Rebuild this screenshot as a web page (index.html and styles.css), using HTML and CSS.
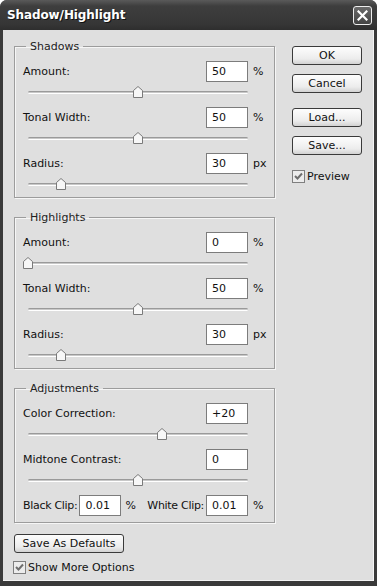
FILE: index.html
```html
<!DOCTYPE html>
<html lang="en">
<head>
    <meta charset="UTF-8">
    <title>Shadow/Highlight</title>
    <link rel="stylesheet" href="styles.css">
</head>
<body>
    <div class="window">
        <div class="titlebar">
            <span class="title">Shadow/Highlight</span>
            <span class="close">
                <svg width="11" height="11" viewBox="0 0 11 11"><path d="M1.5 1.5 L9.5 9.5 M9.5 1.5 L1.5 9.5" stroke="#fff" stroke-width="2.2" stroke-linecap="square"/></svg>
            </span>
        </div>
        <div class="client">
            <div class="main">
                <fieldset class="group">
                    <legend>Shadows</legend>
                    <div class="field"><label>Amount:</label><input class="num" value="50"><span class="unit">%</span></div>
                    <div class="slider"><div class="track"><span class="thumb" style="left: 50%"><svg width="10" height="12" viewBox="0 0 10 12"><path d="M0.5 4.5 L5 0.5 L9.5 4.5 V11.5 H0.5 Z" fill="#f7f7f7" stroke="#7a7a7a"/></svg></span></div></div>
                    <div class="field"><label>Tonal Width:</label><input class="num" value="50"><span class="unit">%</span></div>
                    <div class="slider"><div class="track"><span class="thumb" style="left: 50%"><svg width="10" height="12" viewBox="0 0 10 12"><path d="M0.5 4.5 L5 0.5 L9.5 4.5 V11.5 H0.5 Z" fill="#f7f7f7" stroke="#7a7a7a"/></svg></span></div></div>
                    <div class="field"><label>Radius:</label><input class="num" value="30"><span class="unit">px</span></div>
                    <div class="slider"><div class="track"><span class="thumb" style="left: 15%"><svg width="10" height="12" viewBox="0 0 10 12"><path d="M0.5 4.5 L5 0.5 L9.5 4.5 V11.5 H0.5 Z" fill="#f7f7f7" stroke="#7a7a7a"/></svg></span></div></div>
                </fieldset>

                <fieldset class="group">
                    <legend>Highlights</legend>
                    <div class="field"><label>Amount:</label><input class="num" value="0"><span class="unit">%</span></div>
                    <div class="slider"><div class="track"><span class="thumb" style="left: 0%"><svg width="10" height="12" viewBox="0 0 10 12"><path d="M0.5 4.5 L5 0.5 L9.5 4.5 V11.5 H0.5 Z" fill="#f7f7f7" stroke="#7a7a7a"/></svg></span></div></div>
                    <div class="field"><label>Tonal Width:</label><input class="num" value="50"><span class="unit">%</span></div>
                    <div class="slider"><div class="track"><span class="thumb" style="left: 50%"><svg width="10" height="12" viewBox="0 0 10 12"><path d="M0.5 4.5 L5 0.5 L9.5 4.5 V11.5 H0.5 Z" fill="#f7f7f7" stroke="#7a7a7a"/></svg></span></div></div>
                    <div class="field"><label>Radius:</label><input class="num" value="30"><span class="unit">px</span></div>
                    <div class="slider"><div class="track"><span class="thumb" style="left: 15%"><svg width="10" height="12" viewBox="0 0 10 12"><path d="M0.5 4.5 L5 0.5 L9.5 4.5 V11.5 H0.5 Z" fill="#f7f7f7" stroke="#7a7a7a"/></svg></span></div></div>
                </fieldset>

                <fieldset class="group adjust">
                    <legend>Adjustments</legend>
                    <div class="field"><label>Color Correction:</label><input class="num" value="+20"><span class="unit"></span></div>
                    <div class="slider"><div class="track"><span class="thumb" style="left: 61%"><svg width="10" height="12" viewBox="0 0 10 12"><path d="M0.5 4.5 L5 0.5 L9.5 4.5 V11.5 H0.5 Z" fill="#f7f7f7" stroke="#7a7a7a"/></svg></span></div></div>
                    <div class="field"><label>Midtone Contrast:</label><input class="num" value="0"><span class="unit"></span></div>
                    <div class="slider"><div class="track"><span class="thumb" style="left: 50%"><svg width="10" height="12" viewBox="0 0 10 12"><path d="M0.5 4.5 L5 0.5 L9.5 4.5 V11.5 H0.5 Z" fill="#f7f7f7" stroke="#7a7a7a"/></svg></span></div></div>
                    <div class="field clip">
                        <label>Black Clip:</label><input class="num" value="0.01"><span class="pct">%</span>
                        <label class="white">White Clip:</label><input class="num" value="0.01"><span class="unit">%</span>
                    </div>
                </fieldset>

                <button class="btn defaults">Save As Defaults</button>
                <label class="check more"><span class="box"><svg width="11" height="11" viewBox="0 0 11 11"><path d="M2 5 L4.5 7.5 L9 2.5" fill="none" stroke="#6e6e6e" stroke-width="2"/></svg></span>Show More Options</label>
            </div>

            <div class="side">
                <button class="btn">OK</button>
                <button class="btn cancel">Cancel</button>
                <button class="btn load">Load...</button>
                <button class="btn save">Save...</button>
                <label class="check preview"><span class="box"><svg width="11" height="11" viewBox="0 0 11 11"><path d="M2 5 L4.5 7.5 L9 2.5" fill="none" stroke="#6e6e6e" stroke-width="2"/></svg></span>Preview</label>
            </div>
        </div>
    </div>
</body>
</html>
```

FILE: styles.css
```css
body {
    margin: 0;
    padding: 0;
    background-color: #fff;
    font-family: "DejaVu Sans", Verdana, sans-serif;
    font-size: 11px;
    color: #111;
}

.window {
    width: 377px;
    height: 586px;
    display: flex;
    flex-direction: column;
    background-color: #3a3a3a;
    border-radius: 7px 7px 0 0;
    overflow: hidden;
}

.titlebar {
    height: 30px;
    display: flex;
    align-items: center;
    justify-content: space-between;
    padding: 0 5px 0 7px;
    background: linear-gradient(#5a5a5a, #3e3e3e 20%, #363636 80%, #2e2e2e);
}

.title {
    color: #fff;
    font-weight: bold;
    font-size: 12px;
    letter-spacing: -0.1px;
    text-shadow: 1px 1px 0 #111;
}

.close {
    width: 17px;
    height: 17px;
    border: 1px solid #eee;
    border-radius: 3px;
    background: linear-gradient(#6a6a6a, #444);
    display: flex;
    align-items: center;
    justify-content: center;
    margin-top: 1px;
}

.client {
    flex: 1;
    display: flex;
    gap: 17px;
    margin: 0 3px 5px 3px;
    padding: 10px 0 0 11px;
    background-color: #dfdfdf;
    box-shadow: inset -1px -1px 0 #f4f4f4;
}

.main {
    width: 261px;
    display: flex;
    flex-direction: column;
}

.group {
    margin: 13px 0 0 0;
    padding: 8px 0 0 8px;
    min-width: 0;
    border: 1px solid #9c9c9c;
    box-shadow: 1px 1px 0 #f6f6f6, inset 1px 1px 0 #f6f6f6;
}

.group:first-child {
    margin-top: 0;
}

.group legend {
    padding: 0 4px;
    margin-left: 3px;
    line-height: 13px;
    color: #222;
}

.field {
    display: flex;
    align-items: center;
    height: 21px;
}

.field label {
    flex: 1;
}

.num {
    width: 42px;
    height: 21px;
    box-sizing: border-box;
    border: 1px solid #7c7c7c;
    background-color: #fff;
    padding: 0 0 0 5px;
    font-family: inherit;
    font-size: 11px;
    color: #111;
}

.unit {
    width: 21px;
    margin-left: 5px;
}

.slider {
    height: 25px;
    padding: 9px 26px 0 5px;
    box-sizing: border-box;
}

.slider:last-child {
    height: 23px;
}

.track {
    position: relative;
    height: 3px;
    border-top: 1px solid #9a9a9a;
    border-bottom: 1px solid #fff;
    box-sizing: border-box;
    background-color: #c8c8c8;
    border-radius: 2px;
}

.thumb {
    position: absolute;
    top: -6px;
    margin-left: -5px;
    width: 10px;
    height: 12px;
}

.thumb svg {
    display: block;
}

.adjust {
    padding-bottom: 6px;
}

.clip label {
    flex: none;
    letter-spacing: -0.3px;
}

.clip .num {
    margin-left: 2px;
}

.clip .pct {
    margin-left: 4px;
}

.clip .white {
    margin-left: auto;
}

.btn {
    width: 70px;
    height: 19px;
    padding: 0;
    border: 1px solid #3a3a3a;
    border-radius: 3px;
    background: linear-gradient(#fdfdfd, #ececec 70%, #d2d2d2);
    font-family: inherit;
    font-size: 11px;
    color: #111;
    cursor: pointer;
}

.defaults {
    width: 110px;
    margin-top: 11px;
    margin-left: 0;
}

.check {
    display: flex;
    align-items: center;
    gap: 2px;
    height: 14px;
}

.box {
    width: 11px;
    height: 11px;
    border: 1px solid #7f7f7f;
    background-color: #ececec;
    display: flex;
}

.more {
    margin-top: 7px;
    margin-left: -1px;
}

.side {
    display: flex;
    flex-direction: column;
    padding-top: 6px;
}

.cancel {
    margin-top: 9px;
}

.load {
    margin-top: 15px;
}

.save {
    margin-top: 9px;
}

.preview {
    margin-top: 14px;
}
```
